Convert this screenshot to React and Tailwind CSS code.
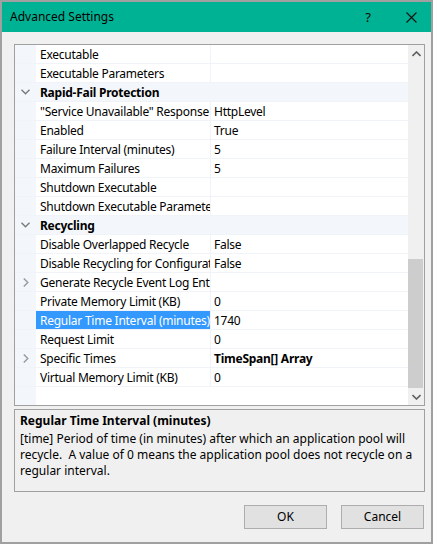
import React from "react";

const F = { fontFamily: '"Segoe UI", "Noto Sans", sans-serif' };

function ChevDown() {
  return (
    <svg width="9" height="6" viewBox="0 0 9 6" className="block">
      <path d="M0.5 0.8 L4.5 4.8 L8.5 0.8" fill="none" stroke="#7a7a7a" strokeWidth="1.4" />
    </svg>
  );
}
function ChevRight() {
  return (
    <svg width="6" height="9" viewBox="0 0 6 9" className="block">
      <path d="M0.8 0.5 L4.8 4.5 L0.8 8.5" fill="none" stroke="#9a9a9a" strokeWidth="1.4" />
    </svg>
  );
}

const rows = [
  { n: "Executable", v: "" },
  { n: "Executable Parameters", v: "" },
  { cat: "Rapid-Fail Protection" },
  { n: "\"Service Unavailable\" Response Type", v: "HttpLevel" },
  { n: "Enabled", v: "True" },
  { n: "Failure Interval (minutes)", v: "5" },
  { n: "Maximum Failures", v: "5" },
  { n: "Shutdown Executable", v: "" },
  { n: "Shutdown Executable Parameters", v: "" },
  { cat: "Recycling" },
  { n: "Disable Overlapped Recycle", v: "False" },
  { n: "Disable Recycling for Configuration Changes", v: "False" },
  { n: "Generate Recycle Event Log Entry", v: "", exp: true },
  { n: "Private Memory Limit (KB)", v: "0" },
  { n: "Regular Time Interval (minutes)", v: "1740", sel: true },
  { n: "Request Limit", v: "0" },
  { n: "Specific Times", v: "TimeSpan[] Array", exp: true, bold: true },
  { n: "Virtual Memory Limit (KB)", v: "0" },
];

function Row({ r }) {
  if (r.cat) {
    return (
      <div className="flex h-[19px] border-b border-[#f0f3f8] bg-[#f3f6fb]">
        <div className="w-[21px] flex items-center justify-center">
          <ChevDown />
        </div>
        <div className="pl-[4px] pt-[2px] flex items-center font-bold text-[#000]">{r.cat}</div>
      </div>
    );
  }
  return (
    <div className="flex h-[19px] border-b border-[#f0f3f8]">
      <div className="w-[21px] shrink-0 bg-[#f3f6fb] flex items-center justify-center">
        {r.exp ? <ChevRight /> : null}
      </div>
      <div
        className={
          "w-[174px] shrink-0 overflow-hidden whitespace-nowrap pl-[4px] pt-[2px] flex items-center " +
          (r.sel ? "bg-[#3399ff] text-white" : "text-black")
        }
      >
        {r.n}
      </div>
      <div className="w-[1px] shrink-0 bg-[#f0f3f8]" />
      <div
        className={
          "flex-1 pl-[3px] pt-[2px] flex items-center whitespace-nowrap overflow-hidden " +
          (r.bold ? "font-bold" : "")
        }
      >
        {r.v}
      </div>
    </div>
  );
}

export default function App() {
  return (
    <div
      className="w-[433px] h-[544px] border-2 border-[#a0a0a0] bg-[#f0f0f0] flex flex-col text-[12px] leading-[16px] text-black overflow-hidden"
      style={F}
    >
      <div className="h-[30px] shrink-0 bg-[#00b294] flex items-center pl-[8px]">
        <span className="text-[12px] text-black">Advanced Settings</span>
        <div className="flex-1" />
        <span className="text-[13px] mr-[35px]">?</span>
        <svg width="11" height="11" viewBox="0 0 11 11" className="mr-[14px]">
          <path d="M0.5 0.5 L10.5 10.5 M10.5 0.5 L0.5 10.5" stroke="#111" strokeWidth="1.1" />
        </svg>
      </div>

      <div className="mt-[12px] ml-[12px] w-[411px] h-[362px] border border-[#a0a0a0] bg-white flex">
        <div className="flex-1 flex flex-col tracking-[-0.25px]">
          {rows.map((r, i) => (
            <Row key={i} r={r} />
          ))}
          <div className="flex-1 flex">
            <div className="w-[21px] bg-[#f3f6fb]" />
          </div>
        </div>
        <div className="w-[16px] bg-[#f0f0f0] flex flex-col">
          <div className="h-[17px] flex items-center justify-center">
            <svg width="9" height="6" viewBox="0 0 9 6">
              <path d="M0.5 5 L4.5 1 L8.5 5" fill="none" stroke="#606060" strokeWidth="1.6" />
            </svg>
          </div>
          <div className="h-[197px]" />
          <div className="flex-1 bg-[#cdcdcd] mr-[1px]" />
          <div className="h-[17px] flex items-center justify-center">
            <svg width="9" height="6" viewBox="0 0 9 6">
              <path d="M0.5 1 L4.5 5 L8.5 1" fill="none" stroke="#606060" strokeWidth="1.6" />
            </svg>
          </div>
        </div>
      </div>

      <div className="mt-[3px] ml-[12px] w-[411px] h-[83px] border border-[#a0a0a0] px-[5px] pt-[3px]">
        <div className="font-bold leading-[16px]">Regular Time Interval (minutes)</div>
        <div className="leading-[16px] mt-[2px]">
          [time] Period of time (in minutes) after which an application pool will recycle.&nbsp; A value of 0 means the application pool does not recycle on a regular interval.
        </div>
      </div>

      <div className="flex justify-end mt-[13px] mr-[7px] gap-[14px]">
        <button className="w-[83px] h-[24px] bg-[#e1e1e1] border border-[#adadad] text-[12px]" style={F}>
          OK
        </button>
        <button className="w-[83px] h-[24px] bg-[#e1e1e1] border border-[#adadad] text-[12px]" style={F}>
          Cancel
        </button>
      </div>
    </div>
  );
}
